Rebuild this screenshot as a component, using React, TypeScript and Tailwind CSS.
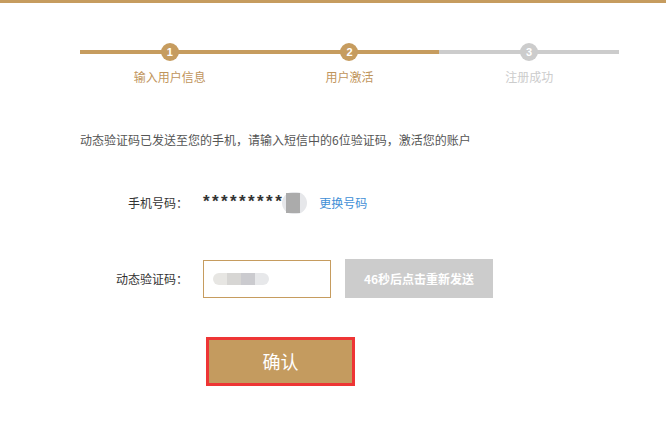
import React from "react";

const font = { fontFamily: '"Noto Sans CJK SC", "Liberation Sans", sans-serif' };

const steps = [
  { n: 1, label: "输入用户信息", done: true },
  { n: 2, label: "用户激活", done: true },
  { n: 3, label: "注册成功", done: false },
];

export default function App() {
  return (
    <div className="min-h-[424px] w-[666px] bg-white" style={font}>
      <div className="h-[3px] bg-[#c69c5f]" />

      {/* steps */}
      <div className="ml-[80px] mt-[40px] grid w-[539px] grid-cols-3">
        {steps.map((s) => (
          <div key={s.n} className="flex flex-col items-center">
            <div className="relative flex h-[18px] w-full items-center justify-center">
              <div className={`absolute left-0 right-0 top-[7px] h-[4px] ${s.done ? "bg-[#c69c5f]" : "bg-[#cccccc]"}`} />
              <div
                className={`relative flex h-[18px] w-[18px] items-center justify-center rounded-full text-[11px] font-bold leading-none text-white ${s.done ? "bg-[#c69c5f]" : "bg-[#cccccc]"}`}
                style={{ fontFamily: '"Liberation Sans", sans-serif' }}
              >
                {s.n}
              </div>
            </div>
            <div className={`mt-[8px] text-[12px] leading-[16px] ${s.done ? "text-[#bf955c]" : "text-[#cccccc]"}`}>
              {s.label}
            </div>
          </div>
        ))}
      </div>

      <p className="ml-[80px] mt-[47px] text-[12px] leading-[16px] text-[#555]">
        动态验证码已发送至您的手机，请输入短信中的6位验证码，激活您的账户
      </p>

      {/* phone row */}
      <div className="mt-[43px] flex h-[24px] items-center">
        <div className="ml-[80px] w-[108px] text-right text-[12px] text-[#333]">手机号码：</div>
        <div className="ml-[15px] flex items-center">
          <span
            className="-mt-[4px] text-[17px] font-bold leading-none tracking-[2.4px] text-[#333]"
            style={{ fontFamily: '"Liberation Sans", sans-serif' }}
          >
            *********
          </span>
          <div className="-ml-[2px] flex h-[22px] w-[25px] items-center justify-center rounded-full bg-[#e6e7ea]">
            <div className="h-[20px] w-[14px] -translate-x-[2px] bg-[#ababab]" />
          </div>
          <span className="ml-[12px] text-[12px] text-[#3f8fd6]">更换号码</span>
        </div>
      </div>

      {/* code row */}
      <div className="mt-[44px] flex items-center">
        <div className="ml-[80px] w-[108px] text-right text-[12px] text-[#333]">动态验证码：</div>
        <div className="ml-[15px] flex h-[38px] w-[128px] items-center border border-[#c69c5f] bg-white pl-[9px]">
          <div className="flex h-[12px] w-[56px] overflow-hidden rounded-full">
            <div className="w-[14px] bg-[#e7e6e3]" />
            <div className="w-[14px] bg-[#d7d6d4]" />
            <div className="w-[14px] bg-[#cbcbcf]" />
            <div className="w-[14px] bg-[#e7e8ea]" />
          </div>
        </div>
        <div className="ml-[14px] flex h-[39px] w-[148px] items-center justify-center bg-[#cccccc] text-[12px] font-bold text-white">
          46秒后点击重新发送
        </div>
      </div>

      {/* confirm */}
      <div className="ml-[206px] mt-[39px] flex h-[49px] w-[149px] items-center justify-center border-[3px] border-[#ee3535] bg-[#c49b5f] text-[18px] text-white">
        确认
      </div>
    </div>
  );
}
